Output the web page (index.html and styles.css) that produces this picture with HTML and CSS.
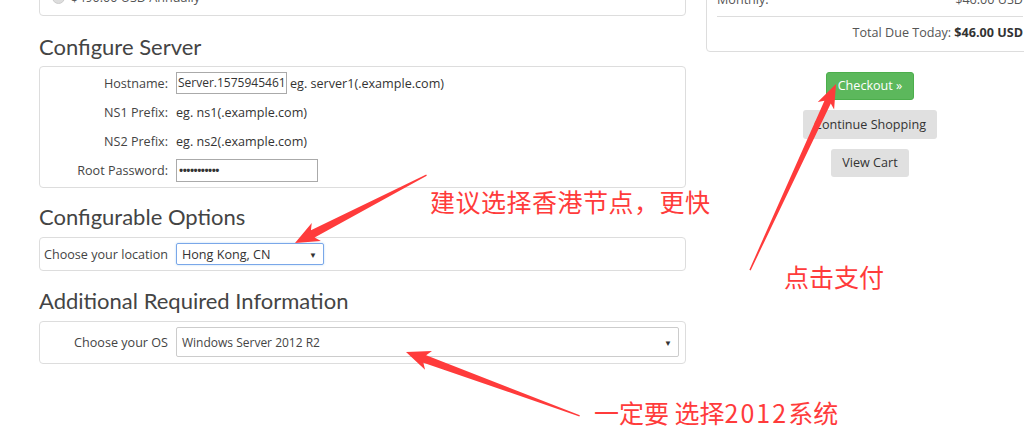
FILE: index.html
```html
<!doctype html>
<html lang="en">
  <head>
    <meta charset="UTF-8" />
    <meta name="viewport" content="width=device-width, initial-scale=1.0" />
    <title>Configure - Order</title>
    <link rel="stylesheet" href="styles.css">
  </head>
  <body>
    <div class="page">
      <div class="main">
        <div class="panel billing">
          <div class="radio-row">
            <span class="radio"></span>
            <span>$490.00 USD Annually</span>
          </div>
        </div>

        <h2>Configure Server</h2>
        <div class="panel server">
          <div class="field">
            <label>Hostname:</label>
            <div class="control">
              <span class="input host">Server.1575945461</span>
              <span>eg. server1(.example.com)</span>
            </div>
          </div>
          <div class="field">
            <label>NS1 Prefix:</label>
            <div class="control">eg. ns1(.example.com)</div>
          </div>
          <div class="field">
            <label>NS2 Prefix:</label>
            <div class="control">eg. ns2(.example.com)</div>
          </div>
          <div class="field">
            <label>Root Password:</label>
            <div class="control">
              <span class="input pass">•••••••••••</span>
            </div>
          </div>
        </div>

        <h2>Configurable Options</h2>
        <div class="panel options">
          <div class="field">
            <label>Choose your location</label>
            <div class="control">
              <span class="select location focused">Hong Kong, CN<i>▼</i></span>
            </div>
          </div>
        </div>

        <h2>Additional Required Information</h2>
        <div class="panel extra">
          <div class="field">
            <label>Choose your OS</label>
            <div class="control">
              <span class="select os">Windows Server 2012 R2<i>▼</i></span>
            </div>
          </div>
        </div>
      </div>

      <div class="sidebar">
        <div class="panel summary">
          <div class="sum-row"><span>Monthly:</span><span>$46.00 USD</span></div>
          <hr />
          <div class="sum-total">Total Due Today: <strong>$46.00 USD</strong></div>
        </div>
        <div class="actions">
          <span class="btn btn-success">Checkout »</span>
          <span class="btn">Continue Shopping</span>
          <span class="btn">View Cart</span>
        </div>
      </div>
    </div>

    <!-- screenshot annotations -->
    <svg class="marks" width="1024" height="446" viewBox="0 0 1024 446">
      <g fill="#ff3b3b">
        <polygon transform="translate(295 243) rotate(152.7)"
          points="0,0 -24,-10 -20,-4 -148,-0.6 -148,0.6 -20,4 -24,10" />
        <polygon transform="translate(836 84) rotate(-65.2)"
          points="0,0 -24,-9 -20,-3.5 -205,-0.7 -205,0.7 -20,3.5 -24,9" />
        <polygon transform="translate(406 352) rotate(-159.8)"
          points="0,0 -24,-10 -20,-4 -185,-0.6 -185,0.6 -20,4 -24,10" />
      </g>
    </svg>
    <div class="note note-hk">建议选择香港节点，更快</div>
    <div class="note note-pay">点击支付</div>
    <div class="note note-os">一定要 选择<span class="num">2012</span>系统</div>
  </body>
</html>
```

FILE: styles.css
```css
body {
  margin: 0;
  width: 1024px;
  height: 446px;
  overflow: hidden;
  position: relative;
  background: #fff;
  color: #333;
  font-family: "Open Sans", "Noto Sans", sans-serif;
  font-size: 12.6px;
}

.page {
  display: grid;
  grid-template-columns: 647px 328px;
  column-gap: 20px;
  padding-left: 39px;
  margin-top: -40px;
  align-items: start;
}

.panel {
  border: 1px solid #ddd;
  border-radius: 4px;
  background: #fff;
}

/* main column */
.billing {
  height: 54px;
  padding: 0 12px;
  display: flex;
  align-items: flex-end;
}

.radio-row {
  display: flex;
  align-items: center;
  gap: 6px;
  height: 18px;
  margin-bottom: 9px;
  color: #555;
}

.radio {
  width: 11px;
  height: 11px;
  border-radius: 50%;
  background: #ddd;
  border: 1px solid #ccc;
}

h2 {
  font-family: "Lato", "Open Sans", sans-serif;
  font-weight: 400;
  font-size: 22px;
  line-height: 24px;
  color: #444;
  margin: 17px 0 8px;
}

.billing + h2 {
  margin-top: 19px;
  margin-bottom: 7px;
}

.options + h2 {
  margin-top: 18px;
}

.field {
  display: grid;
  grid-template-columns: 128px 1fr;
  column-gap: 8px;
  align-items: center;
  min-height: 22px;
}

.field label {
  text-align: right;
  color: #444;
}

.control {
  display: flex;
  align-items: center;
  gap: 3px;
}

.server {
  padding: 5px 0 5px;
  display: flex;
  flex-direction: column;
  gap: 7px;
}

.server .field:last-child {
  min-height: 23px;
}

.input {
  display: inline-block;
  box-sizing: border-box;
  height: 22px;
  line-height: 20px;
  border: 1px solid #aaa;
  padding: 0 1px;
  overflow: hidden;
  white-space: nowrap;
}

.host {
  width: 111px;
  font-size: 12px;
}

.pass {
  width: 142px;
  height: 23px;
  font-size: 11px;
  font-weight: 700;
  letter-spacing: -0.5px;
  padding-left: 2px;
}

.options {
  padding: 5px 0 5px;
}

.extra {
  padding: 5px 6px 6px 0;
}

.select {
  display: flex;
  align-items: center;
  justify-content: space-between;
  box-sizing: border-box;
  border: 1px solid #ccc;
  border-radius: 2px;
  padding: 0 6px 0 5px;
  white-space: nowrap;
}

.select i {
  font-style: normal;
  font-size: 8px;
  color: #333;
}

.location {
  width: 148px;
  height: 22px;
}

.focused {
  border-color: #7aa7e9;
  box-shadow: 0 0 2px rgba(102, 175, 233, 0.5);
}

.os {
  flex: 1;
  height: 30px;
  font-size: 12px;
  color: #444;
}

/* sidebar */
.summary {
  padding: 30px 10px 9px 10px;
  color: #555;
}

.sum-row {
  display: flex;
  justify-content: space-between;
  line-height: 18px;
}

.summary hr {
  border: 0;
  border-top: 1px solid #ddd;
  margin: 7px 0;
}

.sum-total {
  text-align: right;
  line-height: 18px;
}

.sum-total strong {
  color: #333;
}

.actions {
  display: flex;
  flex-direction: column;
  align-items: center;
  gap: 10px;
  margin-top: 20px;
}

.btn {
  display: inline-block;
  padding: 0 11px;
  line-height: 28px;
  border-radius: 3px;
  background: #e0e0e0;
  color: #333;
  white-space: nowrap;
}

.btn + .btn {
  line-height: 29px;
}

.btn + .btn + .btn {
  line-height: 28px;
}

.btn-success {
  background: #5cb85c;
  color: #fff;
  border: 1px solid #4cae4c;
  line-height: 26px;
}

/* annotations */
.marks {
  position: absolute;
  left: 0;
  top: 0;
  pointer-events: none;
}

.note {
  position: absolute;
  font-family: "Noto Sans CJK SC", "Noto Sans", sans-serif;
  font-size: 25px;
  line-height: 1;
  color: #ff3b3b;
  white-space: nowrap;
}

.note-hk {
  left: 430px;
  top: 189px;
  letter-spacing: 0.5px;
}

.note-pay {
  left: 784px;
  top: 264px;
}

.note-os {
  left: 594px;
  top: 400px;
}

.note .num {
  letter-spacing: 2px;
}
```
